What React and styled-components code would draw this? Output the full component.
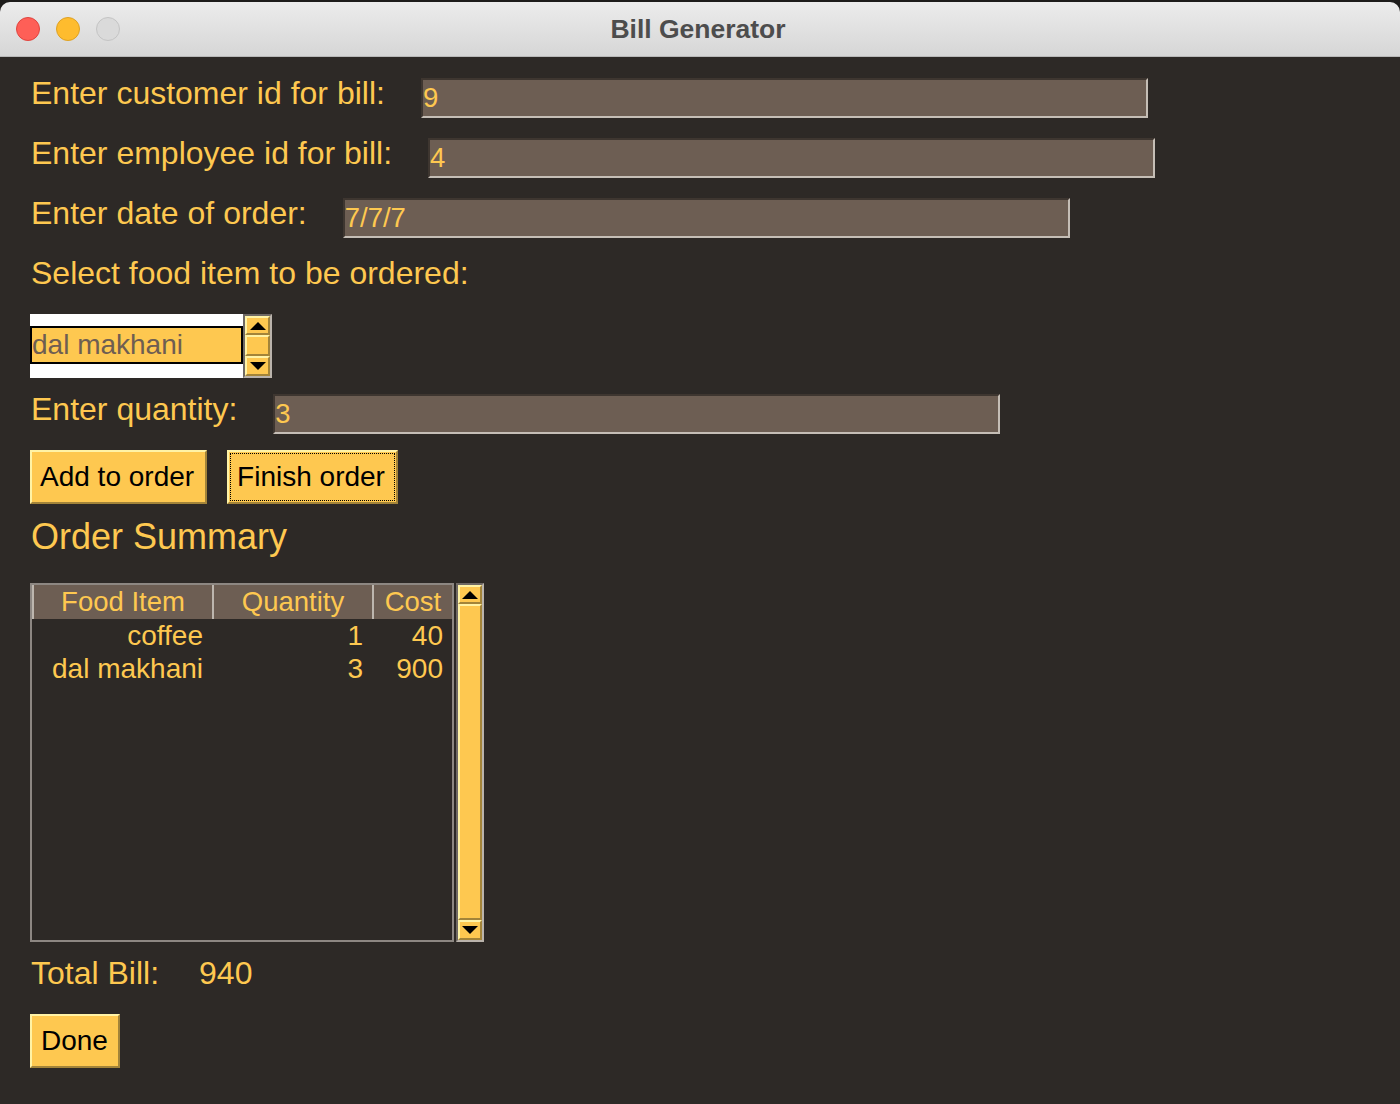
import React from 'react';
import styled, { createGlobalStyle } from 'styled-components';

const GlobalStyle = createGlobalStyle`
  html, body {
    margin: 0;
    padding: 0;
    background: #1d1c1b;
  }
  body {
    font-family: "Liberation Sans", Arial, Helvetica, sans-serif;
  }
  * {
    box-sizing: border-box;
  }
`;

const YELLOW = '#fec850';
const BG = '#2d2926';
const ENTRY_BG = '#6d5e53';

const Window = styled.div`
  width: 1400px;
  height: 1102px;
  margin-top: 2px;
  background: ${BG};
  border-radius: 10px 10px 0 0;
  overflow: hidden;
  display: flex;
  flex-direction: column;
`;

const TitleBar = styled.div`
  flex: none;
  height: 55px;
  display: grid;
  grid-template-columns: 1fr auto 1fr;
  align-items: center;
  background: linear-gradient(#ececec, #d6d6d6);
  border-bottom: 1px solid #b8b8b8;
`;

const Lights = styled.div`
  display: flex;
  gap: 16px;
  padding-left: 16px;
`;

const Light = styled.span`
  width: 24px;
  height: 24px;
  border-radius: 50%;
  background: ${({ $color }) => $color};
  border: 1px solid ${({ $edge }) => $edge};
`;

const Title = styled.div`
  font-size: 26.5px;
  font-weight: bold;
  color: #4d4d4d;
  margin-left: -4px;
`;

const Content = styled.div`
  flex: 1;
  padding: 21px 0 0 30px;
  display: flex;
  flex-direction: column;
  align-items: flex-start;
`;

const FieldRow = styled.div`
  display: flex;
  align-items: center;
  gap: 36px;
  height: 40px;
  margin-top: ${({ $mt }) => $mt}px;
`;

const Label = styled.span`
  font-size: 32px;
  line-height: 30px;
  margin: 0 0 10px 1px;
  color: ${YELLOW};
  white-space: nowrap;
`;

const Entry = styled.input`
  width: 727px;
  height: 40px;
  padding: 0;
  margin: 0;
  background: ${ENTRY_BG};
  border: 2px solid;
  border-color: #3e3630 #c5beb6 #c5beb6 #3e3630;
  color: ${YELLOW};
  font-family: "Liberation Sans", Arial, sans-serif;
  font-size: 27.5px;
  outline: none;
`;

const Picker = styled.div`
  display: flex;
  margin-top: 16px;
`;

const ListBox = styled.div`
  width: 213px;
  height: 64px;
  padding-top: 12px;
  background: #ffffff;
`;

const ListItem = styled.div`
  height: 38px;
  border: 2px solid #000;
  background: ${YELLOW};
  color: #6e5e52;
  font-size: 28px;
  line-height: 34px;
  white-space: nowrap;
`;

const ScrollBar = styled.div`
  width: ${({ $w }) => $w}px;
  height: ${({ $h }) => $h}px;
  display: flex;
  flex-direction: column;
  border: 2px solid;
  border-color: #6f6964 #bab3ab #bab3ab #6f6964;
  background: ${YELLOW};
`;

const ScrollPart = styled.div`
  flex: ${({ $grow }) => ($grow ? 1 : 'none')};
  height: ${({ $h }) => ($h ? `${$h}px` : 'auto')};
  display: flex;
  align-items: center;
  justify-content: center;
  background: ${YELLOW};
  border: 2px solid;
  border-color: #fff3a6 #a38439 #a38439 #fff3a6;
`;

const Arrow = styled.span`
  width: 0;
  height: 0;
  border-left: 8px solid transparent;
  border-right: 8px solid transparent;
  ${({ $down }) => ($down ? 'border-top: 8px solid #000;' : 'border-bottom: 8px solid #000;')}
`;

const ButtonRow = styled.div`
  display: flex;
  gap: 20px;
  margin-top: 16px;
`;

const Button = styled.button`
  position: relative;
  height: 54px;
  margin: 0;
  padding: 0 11px 0 8px;
  background: ${YELLOW};
  border: 2px solid;
  border-color: #fff3a6 #a38439 #a38439 #fff3a6;
  border-radius: 0;
  color: #000;
  font-family: "Liberation Sans", Arial, sans-serif;
  font-size: 28px;
  line-height: 50px;
  cursor: pointer;

  &::after {
    content: '';
    display: ${({ $focused }) => ($focused ? 'block' : 'none')};
    position: absolute;
    inset: 1px;
    border: 1px dotted #000;
  }
`;

const Heading = styled.div`
  margin-top: 13px;
  height: 40px;
  line-height: 40px;
  font-size: 36px;
  color: ${YELLOW};
  margin-left: 1px;
`;

const TableWrap = styled.div`
  display: flex;
  gap: 2px;
  margin-top: 26px;
`;

const Tree = styled.div`
  width: 424px;
  height: 359px;
  border: 2px solid #8d8782;
`;

const TreeRow = styled.div`
  display: grid;
  grid-template-columns: 180px 160px 80px;
  height: ${({ $h }) => $h}px;
`;

const HeadCell = styled.div`
  background: ${ENTRY_BG};
  border-left: 2px solid #bdb6ae;
  color: ${YELLOW};
  font-size: 27.5px;
  line-height: 34px;
  text-align: center;
  white-space: nowrap;
`;

const Cell = styled.div`
  color: ${YELLOW};
  font-size: 28px;
  line-height: 33px;
  text-align: right;
  padding-right: 9px;
  white-space: nowrap;
`;

const TotalRow = styled.div`
  display: flex;
  gap: 40px;
  height: 40px;
  align-items: center;
  margin-top: 11px;
  margin-left: 1px;
  font-size: 32px;
  color: ${YELLOW};
`;

const DoneButton = styled(Button)`
  margin-top: 21px;
  padding: 0 10px 0 9px;
`;

const orders = [
  { item: 'coffee', qty: 1, cost: 40 },
  { item: 'dal makhani', qty: 3, cost: 900 },
];

const fields = [
  { label: 'Enter customer id for bill:', value: '9', mt: 0 },
  { label: 'Enter employee id for bill:', value: '4', mt: 20 },
  { label: 'Enter date of order:', value: '7/7/7', mt: 20 },
];

function Scroller({ w, h }) {
  return (
    <ScrollBar $w={w} $h={h}>
      <ScrollPart $h={19}><Arrow /></ScrollPart>
      <ScrollPart $grow />
      <ScrollPart $h={20}><Arrow $down /></ScrollPart>
    </ScrollBar>
  );
}

export default function App() {
  const total = orders.reduce((sum, o) => sum + o.cost, 0);

  return (
    <>
      <GlobalStyle />
      <Window>
        <TitleBar>
          <Lights>
            <Light $color="#fe5f57" $edge="#e0443e" />
            <Light $color="#febc2e" $edge="#dea123" />
            <Light $color="#dadada" $edge="#c4c4c4" />
          </Lights>
          <Title>Bill Generator</Title>
          <div />
        </TitleBar>
        <Content>
          {fields.map((f) => (
            <FieldRow key={f.label} $mt={f.mt}>
              <Label>{f.label}</Label>
              <Entry readOnly value={f.value} />
            </FieldRow>
          ))}
          <FieldRow $mt={20}>
            <Label>Select food item to be ordered:</Label>
          </FieldRow>
          <Picker>
            <ListBox>
              <ListItem>dal makhani</ListItem>
            </ListBox>
            <Scroller w={29} h={64} />
          </Picker>
          <FieldRow $mt={16}>
            <Label>Enter quantity:</Label>
            <Entry readOnly value="3" />
          </FieldRow>
          <ButtonRow>
            <Button>Add to order</Button>
            <Button $focused>Finish order</Button>
          </ButtonRow>
          <Heading>Order Summary</Heading>
          <TableWrap>
            <Tree>
              <TreeRow $h={34}>
                <HeadCell>Food Item</HeadCell>
                <HeadCell>Quantity</HeadCell>
                <HeadCell>Cost</HeadCell>
              </TreeRow>
              {orders.map((o) => (
                <TreeRow key={o.item} $h={33}>
                  <Cell>{o.item}</Cell>
                  <Cell>{o.qty}</Cell>
                  <Cell>{o.cost}</Cell>
                </TreeRow>
              ))}
            </Tree>
            <Scroller w={28} h={359} />
          </TableWrap>
          <TotalRow>
            <span>Total Bill:</span>
            <span>{total}</span>
          </TotalRow>
          <DoneButton>Done</DoneButton>
        </Content>
      </Window>
    </>
  );
}
